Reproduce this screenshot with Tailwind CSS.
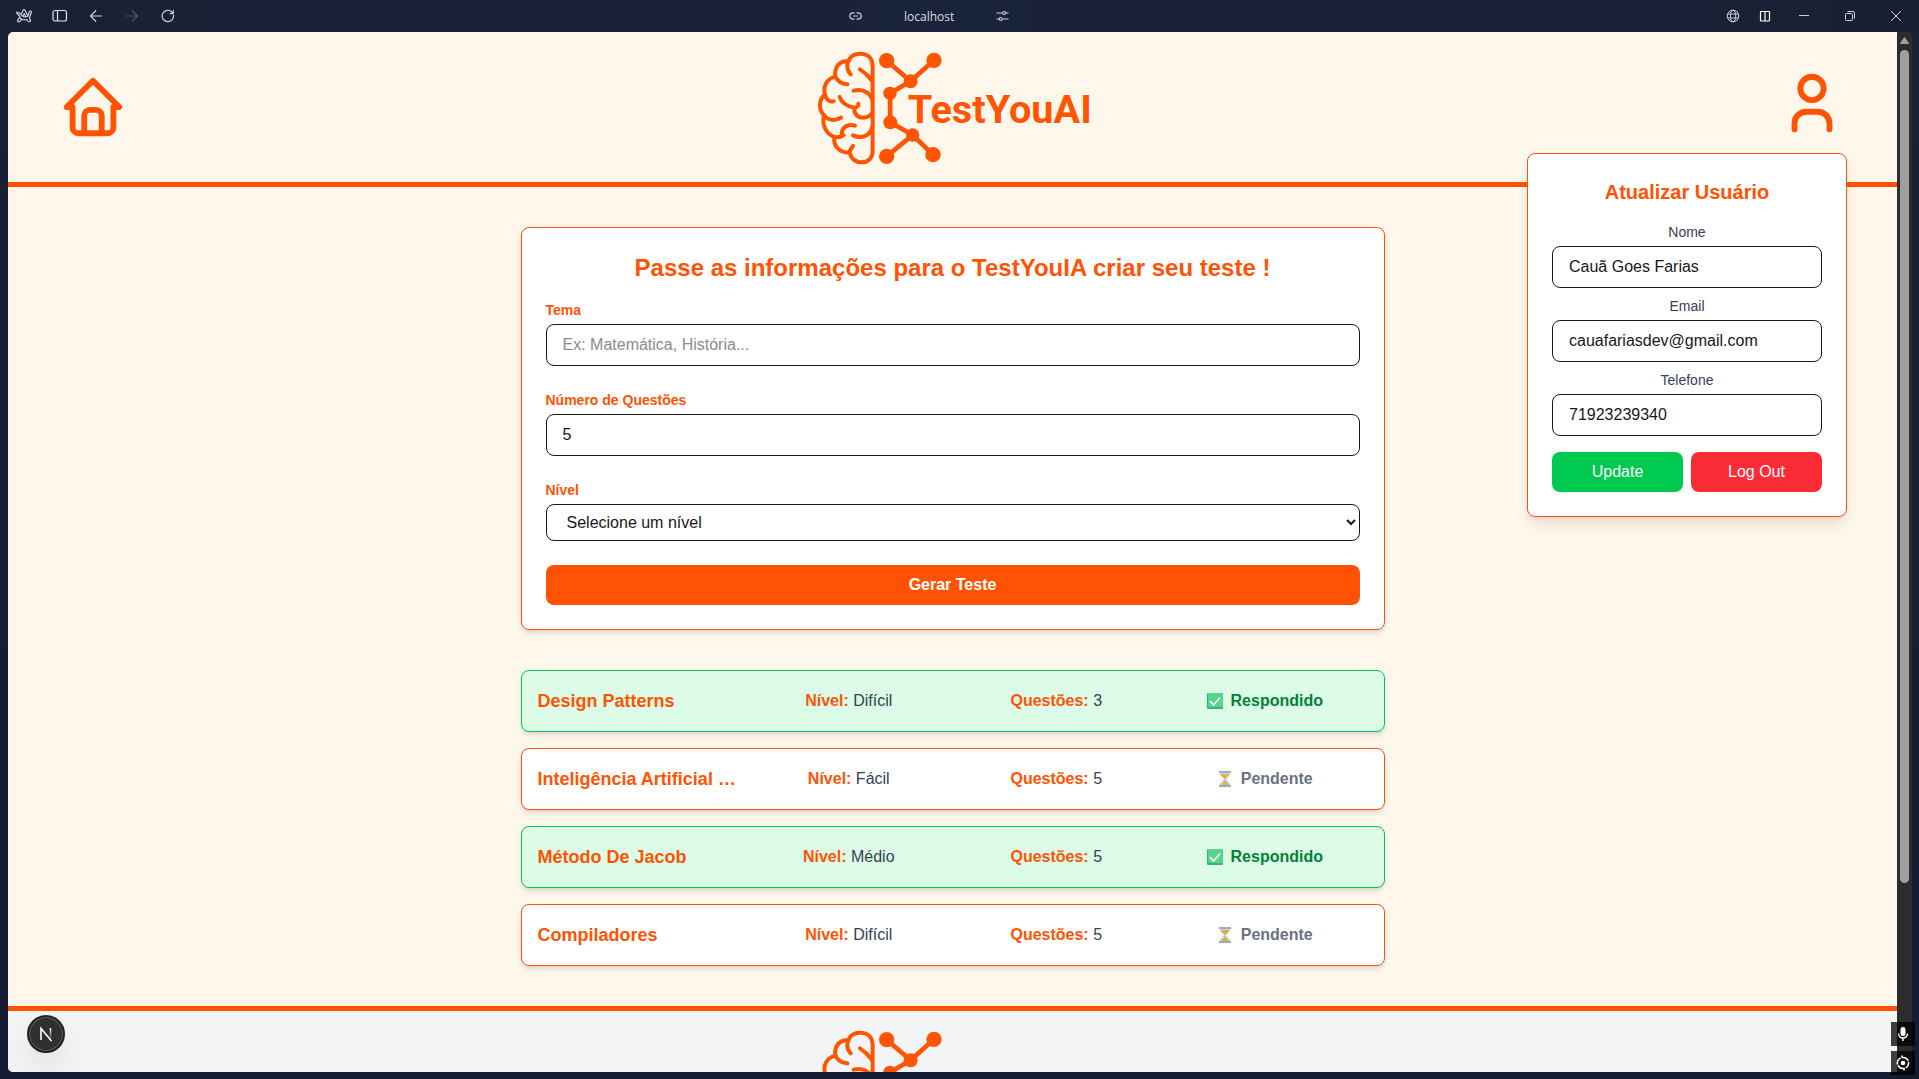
<!DOCTYPE html>
<html lang="pt-BR">
<head>
<meta charset="utf-8">
<meta name="viewport" content="width=device-width, initial-scale=1">
<title>TestYouAI</title>
<script src="https://cdn.jsdelivr.net/npm/@tailwindcss/browser@4"></script>
</head>
<body class="h-screen overflow-hidden flex flex-col bg-linear-to-b from-[#192134] to-[#151b33] font-['Liberation_Sans',Arial,sans-serif] text-[#171717]">

<!-- Shared artwork -->
<svg class="hidden" aria-hidden="true">
  <symbol id="logo" viewBox="38 96 840 450">
    <g fill="none" stroke="#ff5500" stroke-width="12" stroke-linecap="round" stroke-linejoin="round">
      <path d="M217 200C217 174 202 161 180 161C161 161 149 170 144 184C119 181 101 200 105 230C82 236 67 255 74 284C57 296 52 326 71 346C64 372 76 402 102 411C98 438 118 460 147 457C153 476 165 487 184 487C205 487 217 472 217 454Z"/>
      <path d="M144 184C138 198 142 213 151 223M105 230C113 246 125 252 141 253M74 284C78 299 87 306 100 304M71 346C83 361 102 364 122 353M102 411C112 413 121 411 130 405M147 457C149 450 153 445 158 438"/>
      <path d="M179 208C192 216 204 228 213 240M160 272C185 266 210 276 216 300M118 291C124 310 140 319 163 323C171 322 175 317 174 311M163 323C159 340 171 353 190 353C203 352 212 345 216 337M164 377C147 371 126 379 124 400M158 406C185 418 210 407 216 381"/>
      <path d="M259 182L331 244L401 181M331 244L269 280L270 367L337 405L398 464M337 405L259 469" stroke-width="14"/>
    </g>
    <g fill="#ff5500">
      <circle cx="259" cy="182" r="23"/><circle cx="401" cy="181" r="23"/><circle cx="331" cy="244" r="21"/><circle cx="269" cy="280" r="20"/><circle cx="270" cy="367" r="21"/><circle cx="337" cy="405" r="20"/><circle cx="398" cy="464" r="23"/><circle cx="259" cy="469" r="23"/>
      <text x="322" y="369" font-family="Roboto, sans-serif" font-weight="700" font-size="119">TestYouAI</text>
    </g>
  </symbol>
  <symbol id="check" viewBox="1 0 22 18">
    <rect x="3" y="1" width="16" height="16" rx="1" fill="#33b575"/><rect x="4" y="1" width="15" height="14" fill="#56d48c"/>
    <path d="M6 9l3.500 4L16 5.500" fill="none" stroke="#fff" stroke-width="1.600"/>
  </symbol>
  <symbol id="hourglass" viewBox="1 0 22 18">
    <path d="M6 2h10v3l-4 4l4 4v3H6v-3l4-4l-4-4z" fill="#bfe0f3"/>
    <path d="M7 4h8v1l-3.500 4h-1L7 5zM11 10l4 5H7z" fill="#eba94a"/>
    <path d="M5 1h12v2H5zM5 15h12v2H5z" fill="#a0abb5"/>
  </symbol>
</svg>

<!-- Browser toolbar -->
<div class="h-8 shrink-0 grid grid-cols-[14fr_auto_15fr] items-center bg-linear-to-r from-[#192134] via-[#1a233c] to-[#182033] text-[#cdd0d8]">
  <div class="flex items-center gap-4 pl-3.5">
    <button aria-label="Menu" class="w-5 flex justify-center"><svg width="18" height="16" viewBox="0 0 18 16" fill="none" stroke="currentColor" stroke-width="1.200" stroke-linejoin="round" stroke-linecap="round"><path d="M5 8.500L2 5.500Q1 3.500 3.500 4.500L6 6.500L8 2.500Q9 .800 10.200 2.500L13 8L14.200 4Q15.500 2.200 16.500 4L14.500 9.500L15.500 13Q14 14.500 12.800 13L11.800 11.500Q9 12.500 6.500 11.300L5 13.500Q3 14.500 2.500 12.500L4.500 9.500M6 6.500Q9 10.500 13 8M4.500 9.500L6.500 11.300M8 8.500L9.200 5.500L10.800 8.500"/></svg></button>
    <button aria-label="Barra lateral" class="w-5 flex justify-center text-[#e0e2e8]"><svg width="16" height="14" viewBox="0 0 16 14" fill="none" stroke="currentColor" stroke-width="1.200"><rect x="1" y="1.500" width="13.500" height="10.500" rx="2"/><path d="M5.500 1.500V12"/></svg></button>
    <button aria-label="Voltar" class="w-5 flex justify-center"><svg width="14" height="14" viewBox="0 0 14 14" fill="none" stroke="currentColor" stroke-width="1.200"><path d="M13 7H1.500M7 1.500L1.500 7L7 12.500"/></svg></button>
    <button aria-label="Avançar" class="w-5 flex justify-center text-[#515869]"><svg width="14" height="14" viewBox="0 0 14 14" fill="none" stroke="currentColor" stroke-width="1.200"><path d="M1 7H12.500M7 1.500L12.500 7L7 12.500"/></svg></button>
    <button aria-label="Recarregar" class="w-5 flex justify-center"><svg width="14" height="14" viewBox="0 0 14 14" fill="none" stroke="currentColor" stroke-width="1.200"><path d="M12.500 6A5.700 5.700 0 1 1 10 2.200L12 4.500M12.300 1V4.600H8.800"/></svg></button>
  </div>
  <div class="flex items-center justify-center gap-[42px]">
    <svg width="13" height="10" viewBox="0 0 13 10" fill="none" stroke="currentColor" stroke-width="1.200"><path d="M5.500 8.200H4A3.200 3.200 0 0 1 4 1.800H5.500M7.500 1.800H9A3.200 3.200 0 0 1 9 8.200H7.500M4 5H9"/></svg>
    <span class="pt-0.5 font-['Open_Sans',sans-serif] text-[12px] leading-4 text-[#dcdee4]">localhost</span>
    <svg width="13" height="12" viewBox="0 0 13 12" fill="none" stroke="currentColor" stroke-width="1.200"><path d="M.5 3H6.500M10 3H12.500M.5 9H3M6.500 9H12.500"/><circle cx="8.200" cy="3" r="1.500"/><circle cx="4.700" cy="9" r="1.500"/></svg>
  </div>
  <div class="flex items-center justify-end">
    <button aria-label="Idioma" class="w-8 flex justify-center"><svg width="14" height="14" viewBox="0 0 14 14" fill="none" stroke="currentColor"><circle cx="7" cy="7" r="5.800"/><ellipse cx="7" cy="7" rx="2.700" ry="5.800"/><path d="M1.700 5H12.300M1.700 9H12.300"/></svg></button>
    <button aria-label="Dividir tela" class="w-8 flex justify-center text-white"><svg width="12" height="12" viewBox="0 0 12 12" fill="none" stroke="currentColor" stroke-width="1.200"><rect x="1.500" y="1.500" width="9" height="9.500" rx=".5"/><path d="M6 1.500V11"/></svg></button>
    <button aria-label="Minimizar" class="w-[46px] flex justify-center"><svg width="12" height="12" viewBox="0 0 12 12" stroke="currentColor"><path d="M1 5.500H11"/></svg></button>
    <button aria-label="Restaurar" class="w-[46px] flex justify-center"><svg width="12" height="12" viewBox="0 0 12 12" fill="none" stroke="currentColor"><rect x="1.500" y="3.500" width="7" height="7" rx="1"/><path d="M3.500 1.500H9Q10.500 1.500 10.500 3V8.500"/></svg></button>
    <button aria-label="Fechar" class="w-[46px] flex justify-center"><svg width="12" height="12" viewBox="0 0 12 12" stroke="currentColor"><path d="M1 1L11 11M11 1L1 11"/></svg></button>
  </div>
</div>

<div class="relative flex-1 min-h-0 flex pl-2 pr-[7px] pb-[7px]">
  <div class="relative flex-1 min-w-0 overflow-hidden rounded-l-[5px] bg-[#fff6ec]">
    <header class="flex items-center justify-between px-[50px] border-b-5 border-[#ff5303]">
      <a href="#" aria-label="Início"><svg class="size-[70px] text-[#ff5303]" viewBox="0 0 24 24" fill="none" stroke="currentColor" stroke-width="2" stroke-linecap="round" stroke-linejoin="round"><path d="M5 12H3l9-9l9 9h-2M5 12v7a2 2 0 0 0 2 2h10a2 2 0 0 0 2-2v-7M9 21v-6a2 2 0 0 1 2-2h2a2 2 0 0 1 2 2v6"/></svg></a>
      <svg class="w-[280px] h-[150px]" role="img" aria-label="TestYouAI"><use href="#logo"/></svg>
      <div class="relative pb-2">
        <button aria-label="Usuário" class="block"><svg class="size-[70px] text-[#ff5303]" viewBox="0 0 24 24" fill="none" stroke="currentColor" stroke-width="2" stroke-linecap="round" stroke-linejoin="round"><path d="M8 7a4 4 0 1 0 8 0a4 4 0 0 0-8 0M6 21v-2a4 4 0 0 1 4-4h4a4 4 0 0 1 4 4v2"/></svg></button>
        <form class="absolute right-0 top-full mt-[7px] w-80 z-10 flex flex-col bg-white border border-[#ff5303] rounded-lg p-6 shadow-lg">
          <h2 class="text-xl font-bold text-center text-[#ff5303] mb-4">Atualizar Usuário</h2>
          <label for="nome" class="text-sm text-center text-gray-700 mb-1">Nome</label>
          <input id="nome" type="text" value="Cauã Goes Farias" class="w-full border border-[#171717] rounded-lg px-4 py-2 mb-2">
          <label for="email" class="text-sm text-center text-gray-700 mb-1">Email</label>
          <input id="email" type="email" value="cauafariasdev@gmail.com" class="w-full border border-[#171717] rounded-lg px-4 py-2 mb-2">
          <label for="telefone" class="text-sm text-center text-gray-700 mb-1">Telefone</label>
          <input id="telefone" type="tel" value="71923239340" class="w-full border border-[#171717] rounded-lg px-4 py-2 mb-4">
          <div class="grid grid-cols-2 gap-2">
            <button type="button" class="bg-[#00c950] text-white rounded-lg py-2">Update</button>
            <button type="button" class="bg-[#fb2c36] text-white rounded-lg py-2">Log Out</button>
          </div>
        </form>
      </div>
    </header>

    <main class="w-full max-w-4xl mx-auto px-4 py-10 flex flex-col gap-10">
      <form class="flex flex-col gap-6 bg-white border border-[#ff5303] rounded-lg p-6 shadow-md">
        <div>
          <h1 class="text-2xl font-bold text-center text-[#ff5303] mb-4">Passe as informações para o TestYouIA criar seu teste !</h1>
          <label for="tema" class="block text-sm font-bold text-[#ff5303] mb-1">Tema</label>
          <input id="tema" type="text" placeholder="Ex: Matemática, História..." class="block w-full border border-[#171717] rounded-lg px-4 py-2 placeholder:text-[#8b8b8b]">
        </div>
        <div>
          <label for="numero" class="block text-sm font-bold text-[#ff5303] mb-1">Número de Questões</label>
          <input id="numero" type="number" value="5" class="block w-full border border-[#171717] rounded-lg px-4 py-2">
        </div>
        <div>
          <label for="nivel" class="block text-sm font-bold text-[#ff5303] mb-1">Nível</label>
          <select id="nivel" class="block w-full h-[37px] bg-white border border-[#171717] rounded-lg pl-4"><option>Selecione um nível</option><option>Fácil</option><option>Médio</option><option>Difícil</option></select>
        </div>
        <button type="button" class="bg-[#ff5303] text-white font-bold rounded-lg py-2">Gerar Teste</button>
      </form>

      <ul class="flex flex-col gap-4 text-center text-gray-700">
        <li class="grid grid-cols-4 items-center bg-[#dcfce7] border border-[#00c950] rounded-lg p-4 shadow-md">
          <h2 class="text-lg font-bold text-left text-[#ff5303] truncate">Design Patterns</h2>
          <p><b class="text-[#ff5303]">Nível:</b> Difícil</p>
          <p><b class="text-[#ff5303]">Questões:</b> 3</p>
          <p class="flex items-center justify-center gap-1 font-bold text-[#008236]"><svg class="w-[22px] h-[18px]" aria-hidden="true"><use href="#check"/></svg>Respondido</p>
        </li>
        <li class="grid grid-cols-4 items-center bg-white border border-[#ff5303] rounded-lg p-4 shadow-md">
          <h2 class="text-lg font-bold text-left text-[#ff5303] truncate">Inteligência Artificial …</h2>
          <p><b class="text-[#ff5303]">Nível:</b> Fácil</p>
          <p><b class="text-[#ff5303]">Questões:</b> 5</p>
          <p class="flex items-center justify-center gap-1 font-bold text-[#6a7282]"><svg class="w-[22px] h-[18px]" aria-hidden="true"><use href="#hourglass"/></svg>Pendente</p>
        </li>
        <li class="grid grid-cols-4 items-center bg-[#dcfce7] border border-[#00c950] rounded-lg p-4 shadow-md">
          <h2 class="text-lg font-bold text-left text-[#ff5303] truncate">Método De Jacob</h2>
          <p><b class="text-[#ff5303]">Nível:</b> Médio</p>
          <p><b class="text-[#ff5303]">Questões:</b> 5</p>
          <p class="flex items-center justify-center gap-1 font-bold text-[#008236]"><svg class="w-[22px] h-[18px]" aria-hidden="true"><use href="#check"/></svg>Respondido</p>
        </li>
        <li class="grid grid-cols-4 items-center bg-white border border-[#ff5303] rounded-lg p-4 shadow-md">
          <h2 class="text-lg font-bold text-left text-[#ff5303] truncate">Compiladores</h2>
          <p><b class="text-[#ff5303]">Nível:</b> Difícil</p>
          <p><b class="text-[#ff5303]">Questões:</b> 5</p>
          <p class="flex items-center justify-center gap-1 font-bold text-[#6a7282]"><svg class="w-[22px] h-[18px]" aria-hidden="true"><use href="#hourglass"/></svg>Pendente</p>
        </li>
      </ul>
    </main>

    <footer class="flex justify-center border-t-5 border-[#ff5303] bg-gray-100">
      <svg class="w-[280px] h-[150px]" aria-hidden="true"><use href="#logo"/></svg>
    </footer>

    <!-- Dev tools badge -->
    <button aria-label="Next.js" class="absolute left-[19px] bottom-[19px] size-[38px] rounded-full bg-[#303030] border-2 border-[#222] ring-1 ring-inset ring-[#606060] shadow-[0_16px_32px_-8px_rgba(0,0,0,0.24)] flex items-center justify-center">
      <svg width="16" height="16" viewBox="0 0 16 16" fill="none" stroke-width="1.600"><defs><linearGradient id="fade" x1="0" y1="2" x2="0" y2="14" gradientUnits="userSpaceOnUse"><stop stop-color="#fff"/><stop offset="1" stop-color="#fff" stop-opacity="0"/></linearGradient></defs><path d="M3 14V2.500L13.500 15" stroke="#fff"/><path d="M12.500 2V12" stroke="url(#fade)"/></svg>
    </button>
  </div>

  <!-- Scrollbar -->
  <div class="w-[15px] shrink-0 flex flex-col items-center bg-[#2c2c2c] rounded-r-[5px] pt-[5px]" aria-hidden="true">
    <svg width="9" height="8" viewBox="0 0 9 8"><path d="M4.500 0L9 6Q9 7 8 7H1Q0 7 0 6z" fill="#9f9f9f"/></svg>
    <div class="mt-[5px] w-[9px] h-[calc(80%+5px)] rounded-full bg-[#9f9f9f]"></div>
  </div>

  <!-- Recorder overlay -->
  <div class="absolute right-1 bottom-1 flex flex-col gap-[5px] text-white">
    <button aria-label="Microfone" class="size-6 bg-black/75 flex items-center justify-center"><svg width="16" height="18" viewBox="0 0 16 18"><rect x="5.500" y="2" width="5" height="9" rx="2.500" fill="currentColor"/><path d="M3.500 8.500a4.500 4.500 0 0 0 9 0M8 13v3" fill="none" stroke="currentColor" stroke-width="1.400"/></svg></button>
    <button aria-label="Câmera" class="size-6 bg-black/75 flex items-center justify-center"><svg width="16" height="16" viewBox="0 0 16 16"><circle cx="8" cy="8" r="2.300" fill="currentColor"/><circle cx="8" cy="8" r="5.600" fill="none" stroke="currentColor" stroke-width="1.500" stroke-dasharray="7.800 1" stroke-dashoffset="2"/><path d="M7 2.500V.500M9 13.500V15.500" stroke="currentColor" stroke-width="1.500"/></svg></button>
  </div>
</div>
</body>
</html>
